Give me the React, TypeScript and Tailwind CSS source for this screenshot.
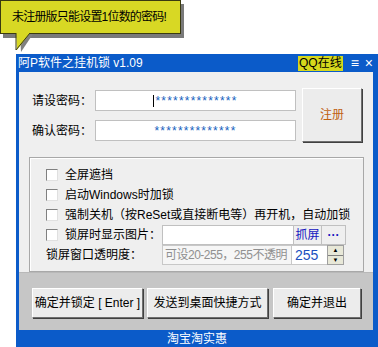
import React from "react";

const font = { fontFamily: '"Liberation Sans", "Noto Sans CJK SC", sans-serif' };

const Box = () => (
  <span className="mr-[7px] h-[12px] w-[12px] shrink-0 border border-t-[#808080] border-l-[#808080] border-r-[#e0e0e0] border-b-[#e0e0e0] bg-white" />
);

const Check = ({ label }: { label: string }) => (
  <div className="flex h-[20px] items-center">
    <Box />
    <span>{label}</span>
  </div>
);

const Btn = ({ children, className }: { children: React.ReactNode; className: string }) => (
  <div
    className={
      "flex items-center justify-center whitespace-nowrap border border-t-white border-l-white border-r-[#6f6f6f] border-b-[#6f6f6f] bg-[#ececec] shadow-[1px_1px_0_#404040] " +
      className
    }
  >
    {children}
  </div>
);

const App = () => {
  return (
    <div className="relative h-[347px] w-[378px] overflow-hidden whitespace-nowrap bg-white text-[12px] text-black" style={font}>
      {/* tooltip */}
      <div className="absolute left-0 top-0 z-10">
        <div className="flex h-[34px] w-[181px] items-center border border-[#3a3a10] bg-[#d8d824] pl-[11px] text-[12px] tracking-[-0.8px] shadow-[3px_4px_0_#7a7a7a]">
          未注册版只能设置1位数的密码!
        </div>
        <svg className="absolute left-[15px] top-[32px]" width="22" height="22" viewBox="0 0 22 22">
          <polygon points="5,2 18,2 6,20" fill="#808080" />
          <polygon points="1,1 15,1 2,18" fill="#d8d824" />
          <polyline points="1,1 1,18 15,1" fill="none" stroke="#3a3a10" strokeWidth="1" />
        </svg>
      </div>

      {/* window */}
      <div className="ml-[16px] mt-[54px] flex h-[293px] w-[362px] flex-col bg-[#0b5bc9]">
        <div className="flex h-[18px] items-center pl-[2px] text-white">
          <span className="flex-1">阿P软件之挂机锁 v1.09</span>
          <span className="flex h-[15px] items-center bg-[#d6d81c] px-[1px] text-[12px] text-black">QQ在线</span>
          <span className="ml-[8px] text-[14px] leading-none text-white">≡</span>
          <span className="ml-[6px] mr-[5px] text-[14px] leading-none text-white">×</span>
        </div>

        <div className="ml-[3px] mr-[5px] flex flex-1 flex-col bg-[#efefef]">
          <div className="flex h-[201px] flex-col border-b border-[#b8b8b8]">
            <div className="flex pl-[13px] pt-[16px]">
              <div className="flex flex-col pt-[2px]">
                <div className="flex h-[21px] items-center">
                  <span className="w-[63px]">请设密码：</span>
                  <div className="flex h-[21px] w-[201px] items-center justify-center border border-[#c0c0c0] bg-white text-[12px] tracking-[1.2px] text-[#1560bd]">
                    <span className="mr-[1px] h-[12px] w-px bg-black" />
                    **************
                  </div>
                </div>
                <div className="mt-[9px] flex h-[21px] items-center">
                  <span className="w-[63px]">确认密码：</span>
                  <div className="flex h-[21px] w-[201px] items-center justify-center border border-[#c0c0c0] bg-white text-[12px] tracking-[1.2px] text-[#1560bd]">
                    **************
                  </div>
                </div>
              </div>
              <Btn className="ml-[6px] h-[54px] w-[60px] text-[12px] text-[#c06010]">注册</Btn>
            </div>

            <div className="ml-[10px] mt-[15px] h-[115px] w-[335px] border border-[#a8a8a8] pl-[16px] pt-[7px] shadow-[inset_1px_1px_0_#ffffff]">
              <Check label="全屏遮挡" />
              <Check label="启动Windows时加锁" />
              <Check label="强制关机（按ReSet或直接断电等）再开机，自动加锁" />
              <div className="flex h-[20px] items-center">
                <Box />
                <span className="w-[97px]">锁屏时显示图片：</span>
                <div className="h-[20px] w-[132px] border border-[#c0c0c0] bg-white" />
                <div className="flex h-[20px] w-[28px] items-center justify-center border border-l-0 border-[#c0c0c0] text-[#1515c0]">抓屏</div>
                <div className="flex h-[20px] w-[24px] items-center justify-center border border-l-0 border-[#c0c0c0] font-bold leading-none text-[#1515c0]">···</div>
              </div>
              <div className="flex h-[20px] items-center">
                <span className="w-[116px]">锁屏窗口透明度：</span>
                <div className="flex h-[20px] w-[130px] items-center overflow-hidden border border-[#c8c8c8] bg-[#f6f6f6] pl-[2px] tracking-[-0.5px] text-[#909090]">可设20-255，255不透明</div>
                <div className="flex h-[20px] w-[35px] items-center border-y border-[#c8c8c8] bg-white pl-[3px] text-[14px] text-[#2050c0]">255</div>
                <div className="flex h-[20px] w-[17px] flex-col border border-[#a0a0a0]">
                  <div className="flex flex-1 items-center justify-center border-b border-[#808080] bg-[#e8e8d8] text-[6px] leading-none">▲</div>
                  <div className="flex flex-1 items-center justify-center bg-[#e8e8d8] text-[6px] leading-none">▼</div>
                </div>
              </div>
            </div>
          </div>

          <div className="flex flex-1 items-start bg-[#c6c6c6] pl-[13px] pt-[15px]">
            <Btn className="h-[30px] w-[111px]">确定并锁定 [ Enter ]</Btn>
            <Btn className="ml-[4px] h-[30px] w-[121px]">发送到桌面快捷方式</Btn>
            <Btn className="ml-[5px] h-[30px] w-[88px]">确定并退出</Btn>
          </div>
        </div>

        <div className="flex h-[17px] items-center justify-center text-white">淘宝淘实惠</div>
      </div>
    </div>
  );
};

export default App;
